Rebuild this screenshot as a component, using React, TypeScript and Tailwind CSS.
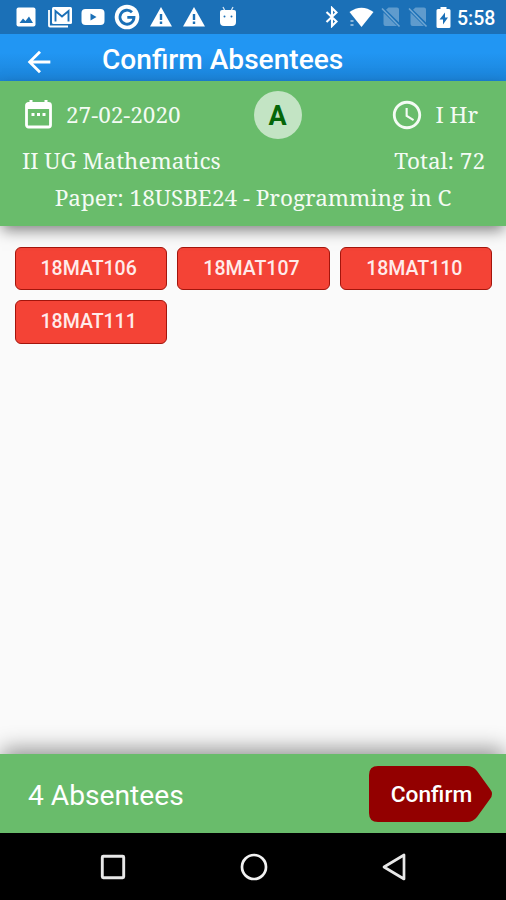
import type { ReactNode } from "react";
import { MdAccessTime, MdArrowBack } from "react-icons/md";

const absentees = ["18MAT106", "18MAT107", "18MAT110", "18MAT111"]

function Slot({ children }: { children: ReactNode }) {
  return <span className="flex h-[34px] w-[33.7px] items-center justify-center">{children}</span>
}

function Warning() {
  return (
    <svg width="24" height="22" viewBox="0 0 24 22">
      <path d="M12 1L23 20.500H1z" fill="#fff" />
      <path d="M12 8v6M12 15.500v2.500" stroke="#1b70b7" strokeWidth="2.400" />
    </svg>
  )
}

function NoSim() {
  return (
    <svg width="20" height="22" viewBox="0 0 20 22">
      <path d="M7.500 1.500H16q2 0 2 2V16.500L5 3.800zM2.500 6.500L16 20H4.500q-2 0-2-2z" fill="#5f9bcd" />
      <path d="M1 2.500L18.500 20.500" stroke="#6fa6d3" strokeWidth="1.600" />
    </svg>
  )
}

function CalendarIcon() {
  return (
    <svg width="33" height="33" viewBox="0 0 33 33" className="shrink-0" fill="none">
      <path d="M9 2v4M24 2v4" stroke="#fff" strokeWidth="3" />
      <rect x="4.500" y="5.500" width="24" height="23.500" rx="2" stroke="#fff" strokeWidth="2.800" />
      <path d="M4 5h25v6H4z" fill="#fff" />
      <path d="M9.500 16.500h3M15 16.500h3M20.500 16.500h3" stroke="#fff" strokeWidth="3" />
    </svg>
  )
}

function StatusBar() {
  return (
    <div className="flex h-[34px] items-center justify-between bg-[#1b70b7] pl-[9px] pr-[12px] text-white">
      <div className="flex">
        <Slot>
          <svg width="20" height="20" viewBox="0 0 20 20">
            <rect x="0.500" y="0.500" width="19" height="19" rx="2" fill="#fff" />
            <path d="M3.500 16l3.500-4.500 2.500 2.500 3.500-4.500 4 6.500z" fill="#1b70b7" />
          </svg>
        </Slot>
        <Slot>
          <svg width="24" height="22" viewBox="0 0 24 22" fill="none">
            <path d="M1 4v15.500q0 1 1 1h18" stroke="#fff" strokeWidth="1.800" />
            <rect x="4" y="1" width="20" height="17" rx="1.500" fill="#fff" />
            <path d="M7.500 15.500V5l6.500 5.500L20.500 5v10.500" stroke="#1b70b7" strokeWidth="1.900" />
          </svg>
        </Slot>
        <Slot>
          <svg width="24" height="18" viewBox="0 0 24 18">
            <rect x="0.500" y="1" width="23" height="16" rx="4" fill="#fff" />
            <path d="M9.500 5.500v7l6-3.500z" fill="#1b70b7" />
          </svg>
        </Slot>
        <Slot>
          <svg width="26" height="26" viewBox="0 0 26 26" fill="none">
            <circle cx="13" cy="13" r="12.300" fill="#fff" />
            <path d="M18 8.300A7 7 0 1 0 20 13.300H13.300" stroke="#1b70b7" strokeWidth="2.800" />
          </svg>
        </Slot>
        <Slot><Warning /></Slot>
        <Slot><Warning /></Slot>
        <Slot>
          <svg width="18" height="22" viewBox="0 0 18 22">
            <path d="M4 1l2 4M14 1l-2 4" stroke="#d5e5f3" strokeWidth="1.300" />
            <path d="M1 6q0-2 2-2h12q2 0 2 2v10q0 4-4 4H5q-4 0-4-4z" fill="#fff" />
            <circle cx="5.500" cy="10.500" r="1" fill="#1b70b7" />
            <circle cx="12.500" cy="10.500" r="1" fill="#1b70b7" />
          </svg>
        </Slot>
      </div>
      <div className="flex items-center">
        <svg width="14" height="22" viewBox="0 0 14 22" className="mr-[10px]" fill="none" stroke="#fff" strokeWidth="2.100">
          <path d="M1.500 6l10 9.500L7 20V2l4.500 4.500L1.500 16" />
        </svg>
        <svg width="25" height="20" viewBox="0 0 25 20" className="mr-[7px]">
          <path d="M0.500 5Q12.500-3.500 24.500 5L12.500 20z" fill="#fff" />
          <path d="M1.500 14h3M1.500 18h3" stroke="#8ab6da" strokeWidth="1.800" />
        </svg>
        <div className="mr-[8px] flex gap-[7px]">
          <NoSim />
          <NoSim />
        </div>
        <svg width="15" height="21" viewBox="0 0 15 21" className="mr-[6px]">
          <path d="M4.500 0h6v2H13q1.500 0 1.500 1.500v16q0 1.500-1.500 1.500H2Q.5 21 .5 19.500v-16Q.5 2 2 2h2.500z" fill="#fff" />
          <path d="M9 5.500L3.500 12.500h3.500v5L12 10.500H9z" fill="#1b70b7" />
        </svg>
        <span className="w-[37px] pt-[3px] whitespace-nowrap text-[19.500px] leading-none font-medium">5:58</span>
      </div>
    </div>
  )
}

function Summary() {
  return (
    <section className="relative z-10 h-[145px] bg-[#69bc6b] pt-[10px] font-['Noto_Serif','DejaVu_Serif_Condensed','DejaVu_Serif',serif] text-[22.500px] text-[#f4fbf4] shadow-[0_6px_14px_-2px_rgba(0,0,0,0.5)]">
      <div className="flex h-[48px] items-center justify-between pr-[28px] pl-[22px]">
        <div className="flex w-[231px] items-center">
          <CalendarIcon />
          <span className="ml-[11px] whitespace-nowrap">27-02-2020</span>
        </div>
        <div className="flex size-[48px] items-center justify-center rounded-full bg-[#c3e4c4] pt-[3px] font-[Roboto,sans-serif] text-[27px] font-bold text-[#056608]">A</div>
        <div className="flex w-[176px] items-center justify-end">
          <MdAccessTime size={34} className="shrink-0" />
          <span className="ml-[11px] whitespace-nowrap">I Hr</span>
        </div>
      </div>
      <div className="mt-[4px] flex h-[36px] items-center justify-between pr-[21px] pl-[22px] whitespace-nowrap">
        <span>II UG Mathematics</span>
        <span>Total: 72</span>
      </div>
      <p className="mt-px flex h-[37px] items-center justify-center whitespace-nowrap">Paper: 18USBE24 - Programming in C</p>
    </section>
  )
}

export default function App() {
  return (
    <div className="flex h-[900px] w-[506px] flex-col overflow-hidden bg-[#fafafa] font-[Roboto,sans-serif]">
      <StatusBar />
      <header className="flex h-[46.500px] items-center bg-linear-to-b from-[#2196f3] from-40% to-[#1b83d8] pt-[4px] text-white">
        <MdArrowBack size={34} className="mt-[6px] ml-[22px]" />
        <h1 className="ml-[46px] pt-px whitespace-nowrap text-[28.100px] leading-none font-medium">Confirm Absentees</h1>
      </header>

      <Summary />

      <main className="grid flex-1 grid-cols-3 content-start gap-x-[10.500px] gap-y-[10px] pt-[21px] pr-[13.500px] pl-[14.500px]">
        {absentees.map((id) => (
          <button key={id} type="button" className="h-[43.500px] rounded-md border border-[#a3150c] bg-[#f44336] pr-[4px] text-[19.500px] font-medium text-[#ffebea]">
            {id}
          </button>
        ))}
      </main>

      <footer className="relative flex h-[79px] items-center justify-between bg-[#69bc6b] pr-[14px] pl-[28px] text-white shadow-[0_-7px_20px_-2px_rgba(0,0,0,0.42)]">
        <span className="pt-[5px] whitespace-nowrap text-[28.200px]">4 Absentees</span>
        <button type="button" className="relative h-[56px] w-[123px]">
          <svg className="absolute inset-0" width="123" height="56" viewBox="0 0 123 56">
            <path d="M9 0H98Q104 0 108 5L121 23Q125 28 121 33L108 51Q104 56 98 56H9Q0 56 0 47V9Q0 0 9 0z" fill="#930000" />
          </svg>
          <span className="relative top-[2px] left-[1px] text-[22.700px] font-medium">Confirm</span>
        </button>
      </footer>

      <nav className="relative grid h-[67px] grid-cols-[113px_281px_113px] bg-black">
        <span className="flex items-center justify-end">
          <svg width="26" height="26" viewBox="0 0 26 26" className="-mr-[13px]" fill="none" stroke="#e8e8e8" strokeWidth="2.900">
            <rect x="2.300" y="2.300" width="21.400" height="21.400" rx="1" />
          </svg>
        </span>
        <span className="flex items-center justify-center">
          <svg width="28" height="28" viewBox="0 0 28 28" fill="none" stroke="#f2f2f2" strokeWidth="2.700">
            <circle cx="14" cy="14" r="12" />
          </svg>
        </span>
        <span className="flex items-center">
          <svg width="26" height="28" viewBox="0 0 26 28" className="-ml-[13px]" fill="none" stroke="#e8e8e8" strokeWidth="2.700" strokeLinejoin="round">
            <path d="M23 2v24L3 14z" />
          </svg>
        </span>
      </nav>
    </div>
  )
}
